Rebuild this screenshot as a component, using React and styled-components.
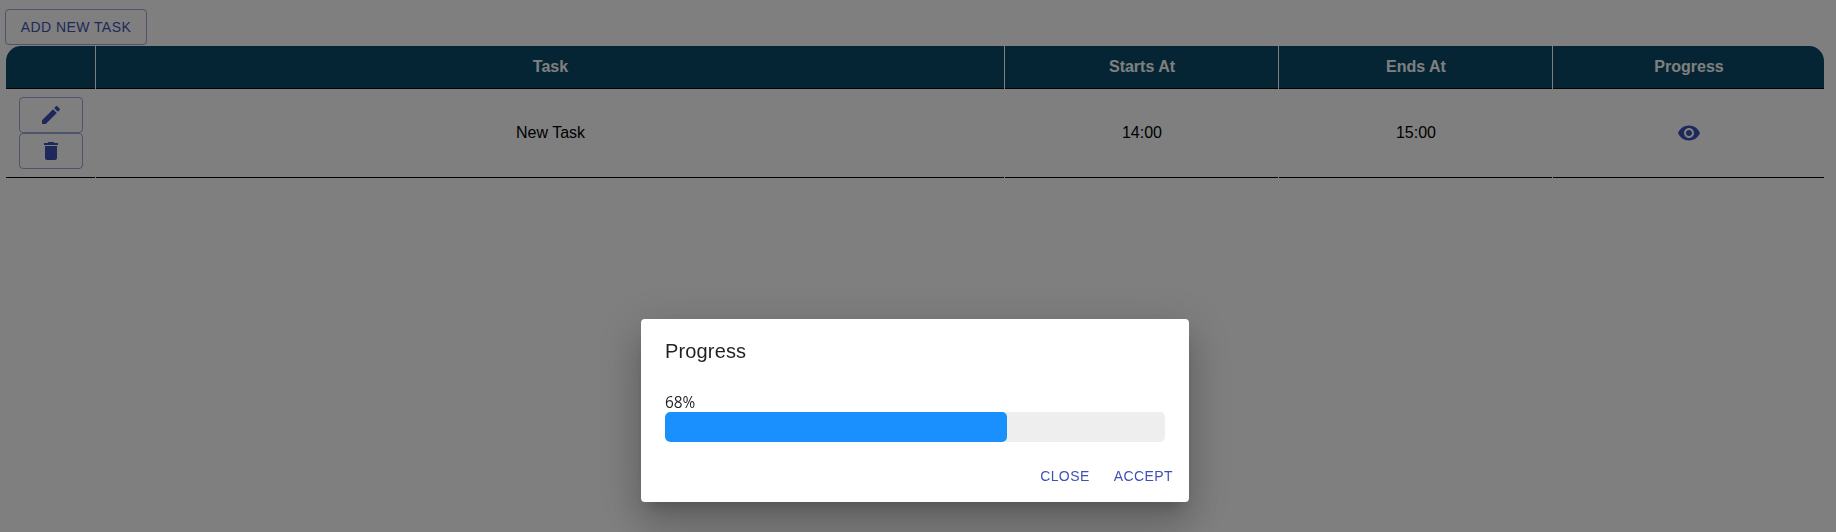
import React from "react";
import styled, { createGlobalStyle, css } from "styled-components";

const GlobalStyle = createGlobalStyle`
  *, *::before, *::after { box-sizing: border-box; }
  body {
    margin: 0;
    background: #fff;
    color: #000;
    font-family: "Liberation Sans", Arial, sans-serif;
    font-size: 16px;
  }
`;

const Page = styled.main`
  min-height: 100vh;
  padding: 9px 12px 0 5px;
`;

const Button = styled.button`
  display: flex;
  align-items: center;
  justify-content: center;
  min-width: 64px;
  height: 36px;
  margin: 0;
  padding: 5px 8px;
  border: 0;
  border-radius: 4px;
  background: transparent;
  color: #3f51b5;
  font: 400 14px/24.5px "Liberation Sans", Arial, sans-serif;
  letter-spacing: 0.42px;
  text-transform: uppercase;
  white-space: nowrap;
  cursor: pointer;
  ${(p) =>
    p.$outlined &&
    css`
      border: 1px solid rgba(63, 81, 181, 0.5);
    `}
  ${(p) => p.$width && `width: ${p.$width}px;`}
`;

const Icon = styled.svg`
  display: block;
  flex: none;
  width: 24px;
  height: 24px;
  fill: #3f51b5;
`;

const Table = styled.div`
  margin: 1px 0 0 1px;
`;

const Row = styled.div`
  display: grid;
  grid-template-columns: 89px 1fr 273px 273px 271px;
  column-gap: 1px;
`;

const HeaderRow = styled(Row)`
  overflow: hidden;
  border-radius: 15px 15px 0 0;
`;

const Cell = styled.div`
  display: flex;
  flex-direction: column;
  align-items: center;
  justify-content: center;
  height: 89px;
  padding-left: 1px;
  border-bottom: 1px solid #000;
`;

const HeaderCell = styled(Cell)`
  height: 43px;
  background: #0a4b68;
  color: #fff;
  font-weight: 700;
`;

const Backdrop = styled.div`
  position: fixed;
  inset: 0;
  display: flex;
  align-items: flex-end;
  justify-content: center;
  padding: 0 6px 30px 0;
  background: rgba(0, 0, 0, 0.5);
`;

const Dialog = styled.section`
  width: 548px;
  height: 183px;
  border-radius: 4px;
  background: #fff;
  box-shadow: 0 11px 15px -7px rgba(0, 0, 0, 0.2),
    0 24px 38px 3px rgba(0, 0, 0, 0.14), 0 9px 46px 8px rgba(0, 0, 0, 0.12);
`;

const DialogTitle = styled.h2`
  margin: 0;
  padding: 16px 24px;
  color: rgba(0, 0, 0, 0.87);
  font-size: 20px;
  font-weight: 400;
  line-height: 32px;
  letter-spacing: 0.15px;
`;

const DialogContent = styled.div`
  padding: 8px 24px;
`;

const Percent = styled.div`
  height: 21px;
  color: rgba(0, 0, 0, 0.87);
  font: 400 15.4px/23px "Open Sans", "Noto Sans", sans-serif;
`;

const Track = styled.div`
  height: 30px;
  overflow: hidden;
  border-radius: 5px;
  background: #eee;
`;

const Bar = styled.div`
  height: 100%;
  border-radius: 5px;
  background: #1a90ff;
`;

const DialogActions = styled.div`
  display: flex;
  justify-content: flex-end;
  gap: 8px;
  padding: 8px;
`;

const PROGRESS = 68.3;

export default function App() {
  return (
    <>
      <GlobalStyle />
      <Page>
        <Button $outlined $width={142}>Add new task</Button>
        <Table>
          <HeaderRow>
            <HeaderCell />
            <HeaderCell>Task</HeaderCell>
            <HeaderCell>Starts At</HeaderCell>
            <HeaderCell>Ends At</HeaderCell>
            <HeaderCell>Progress</HeaderCell>
          </HeaderRow>
          <Row>
            <Cell>
              <Button $outlined aria-label="Edit">
                <Icon viewBox="0 0 24 24">
                  <path d="M3 17.25V21h3.75L17.81 9.94l-3.75-3.75L3 17.25zM20.71 7.04c.39-.39.39-1.02 0-1.41l-2.34-2.34a.9959.9959 0 0 0-1.41 0l-1.83 1.83 3.75 3.75 1.83-1.83z" />
                </Icon>
              </Button>
              <Button $outlined aria-label="Delete">
                <Icon viewBox="0 0 24 24">
                  <path d="M6 19c0 1.1.9 2 2 2h8c1.1 0 2-.9 2-2V7H6v12zM19 4h-3.5l-1-1h-5l-1 1H5v2h14V4z" />
                </Icon>
              </Button>
            </Cell>
            <Cell>New Task</Cell>
            <Cell>14:00</Cell>
            <Cell>15:00</Cell>
            <Cell>
              <Button aria-label="View progress">
                <Icon viewBox="0 0 24 24">
                  <path d="M12 4.5C7 4.5 2.73 7.61 1 12c1.73 4.39 6 7.5 11 7.5s9.27-3.11 11-7.5c-1.73-4.39-6-7.5-11-7.5zM12 17c-2.76 0-5-2.24-5-5s2.24-5 5-5 5 2.24 5 5-2.24 5-5 5zm0-8c-1.66 0-3 1.34-3 3s1.34 3 3 3 3-1.34 3-3-1.34-3-3-3z" />
                </Icon>
              </Button>
            </Cell>
          </Row>
        </Table>
      </Page>
      <Backdrop>
        <Dialog role="dialog" aria-label="Progress">
          <DialogTitle>Progress</DialogTitle>
          <DialogContent>
            <Percent>68%</Percent>
            <Track>
              <Bar style={{ width: `${PROGRESS}%` }} />
            </Track>
          </DialogContent>
          <DialogActions>
            <Button>Close</Button>
            <Button>Accept</Button>
          </DialogActions>
        </Dialog>
      </Backdrop>
    </>
  );
}
